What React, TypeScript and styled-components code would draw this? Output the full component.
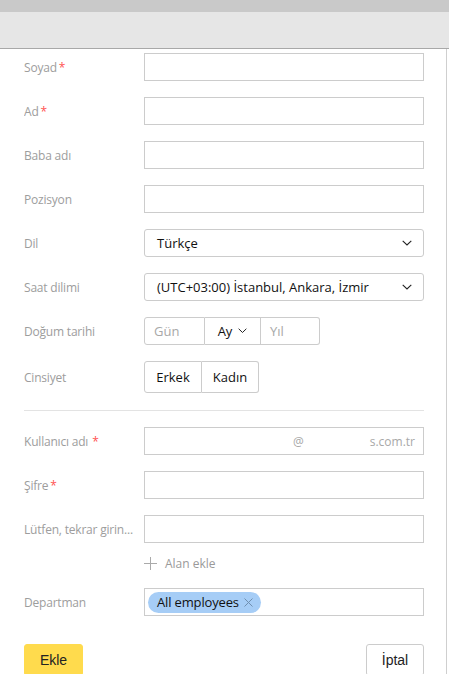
import React from 'react';
import styled, { createGlobalStyle } from 'styled-components';

const GlobalStyle = createGlobalStyle`
  html, body {
    margin: 0;
    padding: 0;
    background: #ffffff;
  }
  body {
    font-family: 'Open Sans', 'Noto Sans', sans-serif;
  }
`;

const Page = styled.div`
  width: 449px;
  height: 674px;
  overflow: hidden;
  background: #ffffff;
`;

const TopStrip = styled.div`
  height: 12px;
  background: #c9c9c9;
`;

const Header = styled.div`
  height: 36px;
  background: #e6e6e6;
  border-bottom: 1px solid #a8a8a8;
`;

const Body = styled.div`
  width: 447px;
  height: 625px;
  border-right: 1px solid #cfcfcf;
  box-sizing: border-box;
  padding: 4px 0 0 24px;
`;

const Form = styled.div`
  width: 400px;
  display: flex;
  flex-direction: column;
`;

const Row = styled.div<{ $gap?: number }>`
  display: grid;
  grid-template-columns: 120px 280px;
  align-items: center;
  margin-bottom: ${p => p.$gap ?? 16}px;
`;

const Label = styled.div`
  font-size: 12px;
  color: #9d9d9d;
  white-space: nowrap;
  overflow: hidden;
  letter-spacing: -0.2px;
`;

const Star = styled.span<{ $space?: boolean }>`
  color: #ff5252;
  margin-left: ${p => (p.$space ? '4px' : '2px')};
`;

const Input = styled.div`
  height: 28px;
  box-sizing: border-box;
  border: 1px solid #cccccc;
  background: #fff;
`;

const Select = styled.div`
  height: 28px;
  box-sizing: border-box;
  border: 1px solid #cccccc;
  border-radius: 3px;
  display: flex;
  align-items: center;
  justify-content: space-between;
  padding: 0 11px 0 12px;
  font-size: 13px;
  color: #111;
`;

const Chevron: React.FC<{ size?: number }> = ({ size = 10 }) => (
  <svg width={size} height={size * 0.6} viewBox="0 0 10 6" fill="none">
    <path d="M0.7 0.8 L5 5 L9.3 0.8" stroke="#222" strokeWidth="1.1" />
  </svg>
);

const Segmented = styled.div<{ $h: number }>`
  display: flex;
  height: ${p => p.$h}px;
`;

const Segment = styled.div<{ $w: number; $placeholder?: boolean; $first?: boolean; $last?: boolean }>`
  width: ${p => p.$w}px;
  box-sizing: border-box;
  border: 1px solid #cccccc;
  border-left-width: ${p => (p.$first ? 1 : 0)}px;
  border-radius: ${p => (p.$first ? '3px 0 0 3px' : p.$last ? '0 3px 3px 0' : '0')};
  display: flex;
  align-items: center;
  justify-content: ${p => (p.$placeholder ? 'flex-start' : 'center')};
  gap: 6px;
  padding-left: ${p => (p.$placeholder ? 9 : 0)}px;
  font-size: 13px;
  color: ${p => (p.$placeholder ? '#a8a8a8' : '#111')};
`;

const Divider = styled.div`
  height: 1px;
  background: #e3e3e3;
  margin: 1px 0 16px;
`;

const UserInput = styled(Input)`
  display: flex;
  align-items: center;
  justify-content: flex-end;
  padding-right: 8px;
  font-size: 12px;
  color: #a8a8a8;
`;

const AtSign = styled.span`
  margin-right: 66px;
`;

const AddField = styled.div`
  display: flex;
  align-items: center;
  gap: 8px;
  height: 17px;
  font-size: 12px;
  color: #9a9a9a;
`;

const TagBox = styled(Input)`
  display: flex;
  align-items: center;
  padding-left: 3px;
`;

const Tag = styled.div`
  height: 21px;
  border-radius: 11px;
  background: #a6cdf6;
  display: flex;
  align-items: center;
  padding: 0 8px 0 9px;
  gap: 5px;
  font-size: 13px;
  letter-spacing: -0.15px;
  color: #111;
`;

const Footer = styled.div`
  width: 400px;
  display: flex;
  justify-content: space-between;
  margin-top: 28px;
`;

const Button = styled.button<{ $primary?: boolean }>`
  height: 32px;
  box-sizing: border-box;
  padding: 0;
  width: ${p => (p.$primary ? 59 : 58)}px;
  border-radius: 3px;
  border: 1px solid ${p => (p.$primary ? '#ffdb4d' : '#cccccc')};
  background: ${p => (p.$primary ? '#ffdb4d' : '#ffffff')};
  font-family: 'Liberation Sans', Arial, sans-serif;
  font-size: 14px;
  color: #222;
`;

export default function App() {
  return (
    <Page>
      <GlobalStyle />
      <TopStrip />
      <Header />
      <Body>
        <Form>
          <Row><Label>Soyad<Star>*</Star></Label><Input /></Row>
          <Row><Label>Ad<Star>*</Star></Label><Input /></Row>
          <Row><Label>Baba adı</Label><Input /></Row>
          <Row><Label>Pozisyon</Label><Input /></Row>
          <Row>
            <Label>Dil</Label>
            <Select>Türkçe<Chevron /></Select>
          </Row>
          <Row>
            <Label>Saat dilimi</Label>
            <Select>(UTC+03:00) İstanbul, Ankara, İzmir<Chevron /></Select>
          </Row>
          <Row>
            <Label>Doğum tarihi</Label>
            <Segmented $h={28}>
              <Segment $w={61} $first $placeholder>Gün</Segment>
              <Segment $w={56}>Ay<Chevron size={9} /></Segment>
              <Segment $w={59} $last $placeholder>Yıl</Segment>
            </Segmented>
          </Row>
          <Row>
            <Label>Cinsiyet</Label>
            <Segmented $h={32}>
              <Segment $w={58} $first>Erkek</Segment>
              <Segment $w={57} $last>Kadın</Segment>
            </Segmented>
          </Row>
          <Divider />
          <Row>
            <Label>Kullanıcı adı<Star $space>*</Star></Label>
            <UserInput><AtSign>@</AtSign>s.com.tr</UserInput>
          </Row>
          <Row><Label>Şifre<Star>*</Star></Label><Input /></Row>
          <Row $gap={12}><Label>Lütfen, tekrar girin...</Label><Input /></Row>
          <Row $gap={16}>
            <span />
            <AddField>
              <svg width="13" height="13" viewBox="0 0 13 13">
                <path d="M6.5 0 V13 M0 6.5 H13" stroke="#aaa" strokeWidth="1" />
              </svg>
              Alan ekle
            </AddField>
          </Row>
          <Row $gap={0}>
            <Label>Departman</Label>
            <TagBox>
              <Tag>
                All employees
                <svg width="9" height="9" viewBox="0 0 9 9">
                  <path d="M0.5 0.5 L8.5 8.5 M8.5 0.5 L0.5 8.5" stroke="#6f8fb0" strokeWidth="1" />
                </svg>
              </Tag>
            </TagBox>
          </Row>
        </Form>
        <Footer>
          <Button $primary>Ekle</Button>
          <Button>İptal</Button>
        </Footer>
      </Body>
    </Page>
  );
}
